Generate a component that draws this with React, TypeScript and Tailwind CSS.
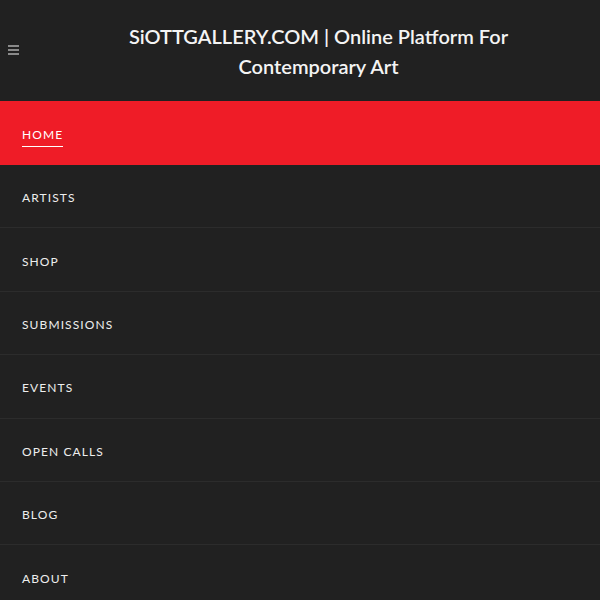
const items = ["Home", "Artists", "Shop", "Submissions", "Events", "Open Calls", "Blog", "About"];

export default function App() {
  return (
    <div className="h-[600px] w-[600px] overflow-hidden bg-[#212121] font-['Lato',sans-serif] text-[#eeeeee]">
      <header className="relative flex h-[101px] items-center justify-center pl-[37px]">
        <button className="absolute left-[8px] top-[45px] flex flex-col gap-[2px]">
          <span className="block h-[2px] w-[11px] bg-[#8a8a8a]" />
          <span className="block h-[2px] w-[11px] bg-[#8a8a8a]" />
          <span className="block h-[2px] w-[11px] bg-[#8a8a8a]" />
        </button>
        <h1 className="pt-[1px] text-center text-[20px] leading-[30px] font-semibold text-[#f4f4f4]">
          SiOTTGALLERY.COM | Online Platform For
          <br />
          Contemporary Art
        </h1>
      </header>
      <nav>
        {items.map((item, i) => (
          <a
            key={item}
            href="#"
            className={
              i === 0
                ? "flex h-[64px] items-center bg-[#ef1c27] px-[22px]"
                : "flex h-[63.4px] items-center border-b border-[#2c2c2c] px-[22px]"
            }
          >
            <span
              className={
                i === 0
                  ? "border-b border-white pt-[6px] pb-[2px] text-[12px] tracking-[1.1px] uppercase text-white"
                  : "pt-[4px] text-[12px] tracking-[1.1px] uppercase"
              }
            >
              {item}
            </span>
          </a>
        ))}
      </nav>
    </div>
  );
}
